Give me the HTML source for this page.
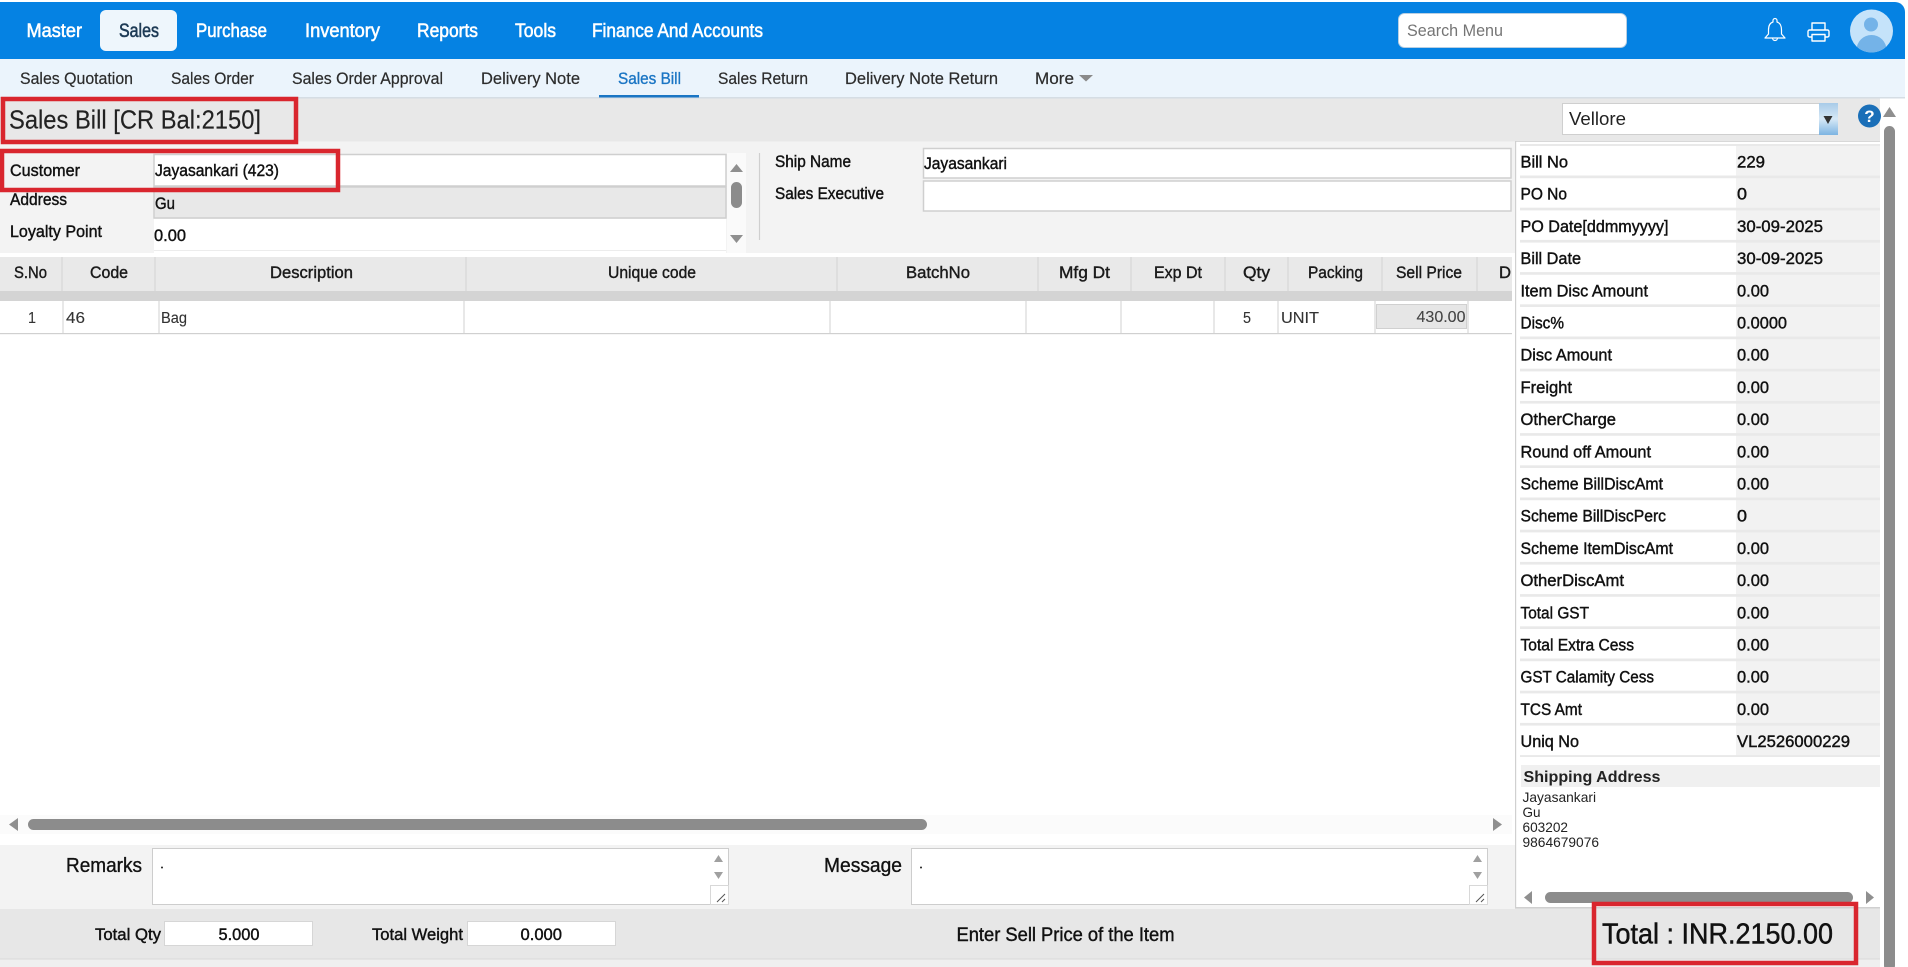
<!DOCTYPE html>
<html lang="en">
<head>
<meta charset="utf-8">
<title>Sales Bill</title>
<style>
html,body{margin:0;padding:0;background:#fff;width:1908px;height:967px;overflow:hidden}
svg{display:block;position:absolute;left:0;top:0}
text{font-family:"Liberation Sans",sans-serif;white-space:pre}
.n{font-size:19px;fill:#fff;stroke:#fff;stroke-width:.55}
.s{font-size:16.5px;fill:#2c2c2c;stroke:#2c2c2c;stroke-width:.2}
.l{font-size:16.5px;fill:#111;stroke:#111;stroke-width:.42}
.h{font-size:16.5px;fill:#1a1a1a;stroke:#1a1a1a;stroke-width:.4}
.c{font-size:15.5px;fill:#333;stroke:#333;stroke-width:.12}
.a{font-size:14px;fill:#222}
.sb{fill:#8c8c8c}
.ar{fill:#8f8f8f}
.in{fill:#fff;stroke:#cfcfcf;stroke-width:1.5}
.d{stroke:#d2d2d2;stroke-width:1}
</style>
</head>
<body>
<svg width="1908" height="967" viewBox="0 0 1908 967" xmlns="http://www.w3.org/2000/svg">
<defs>
<clipPath id="av"><circle cx="1871.5" cy="31" r="21.5"/></clipPath>
<linearGradient id="dd" x1="0" y1="0" x2="0" y2="1"><stop offset="0" stop-color="#a9cbe8"/><stop offset=".5" stop-color="#d6e8f6"/><stop offset="1" stop-color="#7db4e2"/></linearGradient>
</defs>

<!-- top bar -->
<path d="M0 2H1895a10 10 0 0 1 10 10V59H0z" fill="#0582e3"/>
<rect x="100" y="10" width="77" height="41" rx="6" fill="#eef6fc"/>
<text class="n" x="26.5" y="37" textLength="55.5" lengthAdjust="spacingAndGlyphs">Master</text>
<text class="n" x="119" y="37" textLength="40" lengthAdjust="spacingAndGlyphs" style="fill:#1d3a55;stroke:#1d3a55">Sales</text>
<text class="n" x="196" y="37" textLength="71" lengthAdjust="spacingAndGlyphs">Purchase</text>
<text class="n" x="305" y="37" textLength="75" lengthAdjust="spacingAndGlyphs">Inventory</text>
<text class="n" x="417" y="37" textLength="61" lengthAdjust="spacingAndGlyphs">Reports</text>
<text class="n" x="515" y="37" textLength="41" lengthAdjust="spacingAndGlyphs">Tools</text>
<text class="n" x="592" y="37" textLength="171" lengthAdjust="spacingAndGlyphs">Finance And Accounts</text>

<rect x="1398.5" y="13.5" width="228" height="34" rx="6" fill="#fff" stroke="#b9cfe2"/>
<text x="1407" y="36" font-size="16.5" fill="#757575" textLength="96" lengthAdjust="spacingAndGlyphs">Search Menu</text>

<path d="M1775 18.500a2 2 0 0 1 2 2v1.500c3.500 1 4.500 4 4.500 8v4l3.500 4h-20l3.500-4v-4c0-4 1-7 4.500-8v-1.500a2 2 0 0 1 2-2zM1772.500 38a2.500 2.500 0 0 0 5 0" fill="none" stroke="#fff" stroke-width="1.200" stroke-linejoin="round"/>
<g fill="none" stroke="#fff" stroke-width="1.400" stroke-linejoin="round">
<path d="M1812 30v-7h13v7"/>
<path d="M1812 37h-2.500a1.500 1.500 0 0 1-1.500-1.500v-4a1.500 1.500 0 0 1 1.500-1.500h18a1.500 1.500 0 0 1 1.500 1.500v4a1.500 1.500 0 0 1-1.500 1.500H1825"/>
<path d="M1812 34.500h13v6.500h-13z"/>
</g>
<circle cx="1871.500" cy="31" r="21.500" fill="#c5e3fa"/>
<g clip-path="url(#av)"><circle cx="1871" cy="24.500" r="7" fill="#74b3e8"/><ellipse cx="1871.500" cy="50" rx="15" ry="15" fill="#74b3e8"/></g>

<!-- sub nav -->
<rect x="0" y="59" width="1905" height="38" fill="#ebf4fc"/>
<rect x="0" y="97" width="1905" height="1.500" fill="#d5dde4"/>
<rect x="599" y="95" width="100" height="2.500" fill="#1a75c4"/>
<text class="s" x="20" y="84" textLength="113" lengthAdjust="spacingAndGlyphs">Sales Quotation</text>
<text class="s" x="171" y="84" textLength="83" lengthAdjust="spacingAndGlyphs">Sales Order</text>
<text class="s" x="292" y="84" textLength="151" lengthAdjust="spacingAndGlyphs">Sales Order Approval</text>
<text class="s" x="481" y="84" textLength="99" lengthAdjust="spacingAndGlyphs">Delivery Note</text>
<text class="s" x="618" y="84" textLength="63" lengthAdjust="spacingAndGlyphs" style="fill:#1a75c4;stroke:#1a75c4;stroke-width:.35">Sales Bill</text>
<text class="s" x="718" y="84" textLength="90" lengthAdjust="spacingAndGlyphs">Sales Return</text>
<text class="s" x="845" y="84" textLength="153" lengthAdjust="spacingAndGlyphs">Delivery Note Return</text>
<text class="s" x="1035" y="84" textLength="39" lengthAdjust="spacingAndGlyphs">More</text>
<path d="M1079 75h14l-7 6.500z" fill="#8a8a8a"/>

<!-- title strip -->
<rect x="0" y="98.500" width="1880" height="43" fill="#e8e8e8"/>
<text x="9" y="128.500" font-size="26" fill="#222" stroke="#222" stroke-width=".15" textLength="252" lengthAdjust="spacingAndGlyphs">Sales Bill [CR Bal:2150]</text>
<rect x="1562.500" y="103.500" width="257" height="31" fill="#fff" stroke="#cfcfcf"/>
<rect x="1819" y="103" width="19" height="32" fill="url(#dd)"/>
<path d="M1823.500 116h9l-4.500 8z" fill="#333"/>
<text x="1569" y="125" font-size="18.500" fill="#222" textLength="57" lengthAdjust="spacingAndGlyphs">Vellore</text>
<circle cx="1869.500" cy="116" r="11.500" fill="#1a6fb8"/>
<text x="1869.500" y="122" font-size="17" font-weight="bold" fill="#fff" text-anchor="middle">?</text>

<!-- customer block -->
<rect x="0" y="141.500" width="1515" height="111.500" fill="#f3f3f3"/>
<rect x="154" y="154.500" width="572" height="31.500" class="in"/>
<rect x="154" y="187" width="572" height="31" fill="#e8e8e8" stroke="#cfcfcf" stroke-width="1.500"/>
<rect x="154" y="219" width="572" height="34" fill="#fff"/>
<rect x="154" y="250" width="572" height="1" fill="#ececec"/>
<rect x="727" y="153" width="19" height="100" fill="#fafafa"/>
<path d="M730 172l6.500-8 6.500 8z" class="ar"/>
<rect x="731" y="182" width="11" height="26" rx="5.500" class="sb"/>
<path d="M730 235h13l-6.500 8z" class="ar"/>
<line x1="759.500" y1="153" x2="759.500" y2="240" stroke="#cfcfcf" stroke-width="1.200"/>

<text class="l" x="10" y="176" textLength="70" lengthAdjust="spacingAndGlyphs">Customer</text>
<text class="l" x="155" y="176" textLength="124" lengthAdjust="spacingAndGlyphs">Jayasankari (423)</text>
<text class="l" x="10" y="205" textLength="57" lengthAdjust="spacingAndGlyphs">Address</text>
<text class="l" x="155" y="209" textLength="20" lengthAdjust="spacingAndGlyphs">Gu</text>
<text class="l" x="10" y="237" textLength="92" lengthAdjust="spacingAndGlyphs">Loyalty Point</text>
<text class="l" x="154" y="241" textLength="32" lengthAdjust="spacingAndGlyphs">0.00</text>

<text class="l" x="775" y="167" textLength="76" lengthAdjust="spacingAndGlyphs">Ship Name</text>
<text class="l" x="775" y="199" textLength="109" lengthAdjust="spacingAndGlyphs">Sales Executive</text>
<rect x="923.500" y="148.500" width="587.500" height="29.500" class="in"/>
<rect x="923.500" y="181" width="587.500" height="30" class="in"/>
<text class="l" x="924" y="169" textLength="83" lengthAdjust="spacingAndGlyphs">Jayasankari</text>

<!-- table header -->
<rect x="0" y="257" width="1512" height="34" fill="#e9e9e9"/>
<rect x="0" y="291" width="1512" height="10" fill="#d4d4d4"/>
<g class="d">
<line x1="62" y1="257" x2="62" y2="291"/><line x1="155" y1="257" x2="155" y2="291"/><line x1="466" y1="257" x2="466" y2="291"/><line x1="837" y1="257" x2="837" y2="291"/><line x1="1038" y1="257" x2="1038" y2="291"/><line x1="1131" y1="257" x2="1131" y2="291"/><line x1="1225" y1="257" x2="1225" y2="291"/><line x1="1288" y1="257" x2="1288" y2="291"/><line x1="1382" y1="257" x2="1382" y2="291"/><line x1="1477" y1="257" x2="1477" y2="291"/>
</g>
<text class="h" x="14" y="278" textLength="33" lengthAdjust="spacingAndGlyphs">S.No</text>
<text class="h" x="90" y="278" textLength="38" lengthAdjust="spacingAndGlyphs">Code</text>
<text class="h" x="270" y="278" textLength="83" lengthAdjust="spacingAndGlyphs">Description</text>
<text class="h" x="608" y="278" textLength="88" lengthAdjust="spacingAndGlyphs">Unique code</text>
<text class="h" x="906" y="278" textLength="64" lengthAdjust="spacingAndGlyphs">BatchNo</text>
<text class="h" x="1059" y="278" textLength="51" lengthAdjust="spacingAndGlyphs">Mfg Dt</text>
<text class="h" x="1154" y="278" textLength="48" lengthAdjust="spacingAndGlyphs">Exp Dt</text>
<text class="h" x="1243" y="278" textLength="27" lengthAdjust="spacingAndGlyphs">Qty</text>
<text class="h" x="1308" y="278" textLength="55" lengthAdjust="spacingAndGlyphs">Packing</text>
<text class="h" x="1396" y="278" textLength="66" lengthAdjust="spacingAndGlyphs">Sell Price</text>
<text class="h" x="1499" y="278" textLength="12" lengthAdjust="spacingAndGlyphs">D</text>

<!-- table row -->
<rect x="0" y="333" width="1512" height="1.200" fill="#d0d0d0"/>
<g class="d">
<line x1="63" y1="301" x2="63" y2="333"/><line x1="159" y1="301" x2="159" y2="333"/><line x1="464" y1="301" x2="464" y2="333"/><line x1="830" y1="301" x2="830" y2="333"/><line x1="1026" y1="301" x2="1026" y2="333"/><line x1="1121" y1="301" x2="1121" y2="333"/><line x1="1214" y1="301" x2="1214" y2="333"/><line x1="1278" y1="301" x2="1278" y2="333"/><line x1="1375" y1="301" x2="1375" y2="333"/><line x1="1468" y1="301" x2="1468" y2="333"/>
</g>
<rect x="1376.500" y="304.500" width="90" height="24" fill="#e6e6e6" stroke="#d0d0d0"/>
<text class="c" x="28" y="323" textLength="8" lengthAdjust="spacingAndGlyphs">1</text>
<text class="c" x="66" y="323" textLength="19" lengthAdjust="spacingAndGlyphs">46</text>
<text class="c" x="161" y="323" textLength="26" lengthAdjust="spacingAndGlyphs">Bag</text>
<text class="c" x="1243" y="323" textLength="8" lengthAdjust="spacingAndGlyphs">5</text>
<text class="c" x="1281" y="323" textLength="38" lengthAdjust="spacingAndGlyphs">UNIT</text>
<text class="c" x="1416.500" y="322" textLength="49" lengthAdjust="spacingAndGlyphs" style="fill:#444;stroke:#444">430.00</text>

<!-- main horizontal scrollbar -->
<rect x="0" y="815" width="1512" height="19" fill="#fbfbfb"/>
<path d="M18 818v13l-9-6.500z" class="ar"/>
<rect x="28" y="819" width="899" height="11" rx="5.500" class="sb"/>
<path d="M1493 818v13l9-6.500z" class="ar"/>

<!-- remarks -->
<rect x="0" y="845" width="1515" height="63" fill="#f3f3f3"/>
<text x="66" y="872" font-size="20" fill="#111" stroke="#111" stroke-width=".35" textLength="76" lengthAdjust="spacingAndGlyphs">Remarks</text>
<text x="824" y="872" font-size="20" fill="#111" stroke="#111" stroke-width=".35" textLength="78" lengthAdjust="spacingAndGlyphs">Message</text>
<rect x="152.500" y="848.500" width="576" height="56" fill="#fff" stroke="#cdcdcd"/>
<rect x="911.500" y="848.500" width="576" height="56" fill="#fff" stroke="#cdcdcd"/>
<circle cx="162" cy="867.500" r="1" fill="#222"/>
<circle cx="921" cy="867.500" r="1" fill="#222"/>
<path d="M714 862l4.500-7 4.500 7zM714 872h9l-4.500 7z" fill="#a0a0a0"/>
<path d="M1473 862l4.500-7 4.500 7zM1473 872h9l-4.500 7z" fill="#a0a0a0"/>
<rect x="710.500" y="885.500" width="18" height="19" fill="#fff" stroke="#d8d8d8"/>
<rect x="1469.500" y="885.500" width="18" height="19" fill="#fff" stroke="#d8d8d8"/>
<path d="M717 902l8-8M722 902l3-3" stroke="#555" stroke-width="1" fill="none"/>
<path d="M1476 902l8-8M1481 902l3-3" stroke="#555" stroke-width="1" fill="none"/>

<!-- right panel -->
<rect x="1515" y="141" width="365" height="767" fill="#fff"/>
<rect x="1515" y="141" width="365" height="1" fill="#d8d8d8"/>
<rect x="1515" y="141" width="1.200" height="767" fill="#d0d0d0"/>
<rect x="1515" y="907" width="365" height="1.500" fill="#d0d0d0"/>
<rect x="1520" y="144" width="360" height="613" fill="#e9e9e9"/>
<g fill="#fff">
<rect x="1520" y="146" width="216" height="29.500"/><rect x="1520" y="178.200" width="216" height="29.500"/><rect x="1520" y="210.400" width="216" height="29.500"/><rect x="1520" y="242.600" width="216" height="29.500"/><rect x="1520" y="274.800" width="216" height="29.500"/><rect x="1520" y="307" width="216" height="29.500"/><rect x="1520" y="339.200" width="216" height="29.500"/><rect x="1520" y="371.400" width="216" height="29.500"/><rect x="1520" y="403.600" width="216" height="29.500"/><rect x="1520" y="435.800" width="216" height="29.500"/><rect x="1520" y="468" width="216" height="29.500"/><rect x="1520" y="500.200" width="216" height="29.500"/><rect x="1520" y="532.400" width="216" height="29.500"/><rect x="1520" y="564.600" width="216" height="29.500"/><rect x="1520" y="596.800" width="216" height="29.500"/><rect x="1520" y="629" width="216" height="29.500"/><rect x="1520" y="661.200" width="216" height="29.500"/><rect x="1520" y="693.400" width="216" height="29.500"/><rect x="1520" y="725.600" width="216" height="29.500"/>
</g>
<g fill="#f2f2f2">
<rect x="1736" y="146" width="144" height="29.500"/><rect x="1736" y="178.200" width="144" height="29.500"/><rect x="1736" y="210.400" width="144" height="29.500"/><rect x="1736" y="242.600" width="144" height="29.500"/><rect x="1736" y="274.800" width="144" height="29.500"/><rect x="1736" y="307" width="144" height="29.500"/><rect x="1736" y="339.200" width="144" height="29.500"/><rect x="1736" y="371.400" width="144" height="29.500"/><rect x="1736" y="403.600" width="144" height="29.500"/><rect x="1736" y="435.800" width="144" height="29.500"/><rect x="1736" y="468" width="144" height="29.500"/><rect x="1736" y="500.200" width="144" height="29.500"/><rect x="1736" y="532.400" width="144" height="29.500"/><rect x="1736" y="564.600" width="144" height="29.500"/><rect x="1736" y="596.800" width="144" height="29.500"/><rect x="1736" y="629" width="144" height="29.500"/><rect x="1736" y="661.200" width="144" height="29.500"/><rect x="1736" y="693.400" width="144" height="29.500"/><rect x="1736" y="725.600" width="144" height="29.500"/>
</g>
<text class="l" x="1520.500" y="167.500" textLength="47.500" lengthAdjust="spacingAndGlyphs">Bill No</text>
<text class="l" x="1520.500" y="199.700" textLength="46.500" lengthAdjust="spacingAndGlyphs">PO No</text>
<text class="l" x="1520.500" y="231.900" textLength="148" lengthAdjust="spacingAndGlyphs">PO Date[ddmmyyyy]</text>
<text class="l" x="1520.500" y="264.100" textLength="60.500" lengthAdjust="spacingAndGlyphs">Bill Date</text>
<text class="l" x="1520.500" y="296.300" textLength="127.500" lengthAdjust="spacingAndGlyphs">Item Disc Amount</text>
<text class="l" x="1520.500" y="328.500" textLength="43.500" lengthAdjust="spacingAndGlyphs">Disc%</text>
<text class="l" x="1520.500" y="360.700" textLength="91.500" lengthAdjust="spacingAndGlyphs">Disc Amount</text>
<text class="l" x="1520.500" y="392.900" textLength="51.500" lengthAdjust="spacingAndGlyphs">Freight</text>
<text class="l" x="1520.500" y="425.100" textLength="95.500" lengthAdjust="spacingAndGlyphs">OtherCharge</text>
<text class="l" x="1520.500" y="457.300" textLength="130.500" lengthAdjust="spacingAndGlyphs">Round off Amount</text>
<text class="l" x="1520.500" y="489.500" textLength="142.500" lengthAdjust="spacingAndGlyphs">Scheme BillDiscAmt</text>
<text class="l" x="1520.500" y="521.700" textLength="145.500" lengthAdjust="spacingAndGlyphs">Scheme BillDiscPerc</text>
<text class="l" x="1520.500" y="553.900" textLength="152.500" lengthAdjust="spacingAndGlyphs">Scheme ItemDiscAmt</text>
<text class="l" x="1520.500" y="586.100" textLength="103.500" lengthAdjust="spacingAndGlyphs">OtherDiscAmt</text>
<text class="l" x="1520.500" y="618.300" textLength="68.500" lengthAdjust="spacingAndGlyphs">Total GST</text>
<text class="l" x="1520.500" y="650.500" textLength="113.500" lengthAdjust="spacingAndGlyphs">Total Extra Cess</text>
<text class="l" x="1520.500" y="682.700" textLength="133.500" lengthAdjust="spacingAndGlyphs">GST Calamity Cess</text>
<text class="l" x="1520.500" y="714.900" textLength="61.500" lengthAdjust="spacingAndGlyphs">TCS Amt</text>
<text class="l" x="1520.500" y="747.100" textLength="58.500" lengthAdjust="spacingAndGlyphs">Uniq No</text>

<text class="l" x="1737" y="167.500" textLength="28" lengthAdjust="spacingAndGlyphs">229</text>
<text class="l" x="1737" y="199.700" textLength="10" lengthAdjust="spacingAndGlyphs">0</text>
<text class="l" x="1737" y="231.900" textLength="86" lengthAdjust="spacingAndGlyphs">30-09-2025</text>
<text class="l" x="1737" y="264.100" textLength="86" lengthAdjust="spacingAndGlyphs">30-09-2025</text>
<text class="l" x="1737" y="296.300" textLength="32" lengthAdjust="spacingAndGlyphs">0.00</text>
<text class="l" x="1737" y="328.500" textLength="50" lengthAdjust="spacingAndGlyphs">0.0000</text>
<text class="l" x="1737" y="360.700" textLength="32" lengthAdjust="spacingAndGlyphs">0.00</text>
<text class="l" x="1737" y="392.900" textLength="32" lengthAdjust="spacingAndGlyphs">0.00</text>
<text class="l" x="1737" y="425.100" textLength="32" lengthAdjust="spacingAndGlyphs">0.00</text>
<text class="l" x="1737" y="457.300" textLength="32" lengthAdjust="spacingAndGlyphs">0.00</text>
<text class="l" x="1737" y="489.500" textLength="32" lengthAdjust="spacingAndGlyphs">0.00</text>
<text class="l" x="1737" y="521.700" textLength="10" lengthAdjust="spacingAndGlyphs">0</text>
<text class="l" x="1737" y="553.900" textLength="32" lengthAdjust="spacingAndGlyphs">0.00</text>
<text class="l" x="1737" y="586.100" textLength="32" lengthAdjust="spacingAndGlyphs">0.00</text>
<text class="l" x="1737" y="618.300" textLength="32" lengthAdjust="spacingAndGlyphs">0.00</text>
<text class="l" x="1737" y="650.500" textLength="32" lengthAdjust="spacingAndGlyphs">0.00</text>
<text class="l" x="1737" y="682.700" textLength="32" lengthAdjust="spacingAndGlyphs">0.00</text>
<text class="l" x="1737" y="714.900" textLength="32" lengthAdjust="spacingAndGlyphs">0.00</text>
<text class="l" x="1737" y="747.100" textLength="113" lengthAdjust="spacingAndGlyphs">VL2526000229</text>

<rect x="1521" y="765" width="359" height="22" fill="#f0f0f0"/>
<text x="1523.500" y="782" font-size="16" font-weight="bold" fill="#222" textLength="137" lengthAdjust="spacingAndGlyphs">Shipping Address</text>
<text class="a" x="1522.500" y="802" textLength="73.500" lengthAdjust="spacingAndGlyphs">Jayasankari</text>
<text class="a" x="1522.500" y="817" textLength="18" lengthAdjust="spacingAndGlyphs">Gu</text>
<text class="a" x="1522.500" y="832" textLength="45.500" lengthAdjust="spacingAndGlyphs">603202</text>
<text class="a" x="1522.500" y="847" textLength="76.500" lengthAdjust="spacingAndGlyphs">9864679076</text>

<path d="M1532 891v13l-8-6.500z" class="ar"/>
<rect x="1545" y="892" width="308" height="11" rx="5.500" class="sb"/>
<path d="M1866 891v13l8-6.500z" class="ar"/>

<!-- footer -->
<rect x="0" y="908.500" width="1880" height="50.500" fill="#e7e7e7"/>
<rect x="0" y="959" width="1880" height="8" fill="#efefef"/>
<rect x="0" y="958.500" width="1880" height="1" fill="#dadada"/>
<rect x="164.500" y="921.500" width="148" height="24" fill="#fff" stroke="#d6d6d6"/>
<rect x="467.500" y="921.500" width="148" height="24" fill="#fff" stroke="#d6d6d6"/>
<text class="l" x="95" y="940" textLength="66" lengthAdjust="spacingAndGlyphs">Total Qty</text>
<text class="l" x="218.500" y="940" textLength="41" lengthAdjust="spacingAndGlyphs">5.000</text>
<text class="l" x="372" y="940" textLength="91" lengthAdjust="spacingAndGlyphs">Total Weight</text>
<text class="l" x="520.500" y="940" textLength="41.500" lengthAdjust="spacingAndGlyphs">0.000</text>
<text x="956.500" y="941" font-size="19" fill="#111" stroke="#111" stroke-width=".4" textLength="218" lengthAdjust="spacingAndGlyphs">Enter Sell Price of the Item</text>
<text x="1602" y="943.500" font-size="28.500" fill="#111" stroke="#111" stroke-width=".45" textLength="231" lengthAdjust="spacingAndGlyphs">Total : INR.2150.00</text>

<!-- right page scrollbar -->
<path d="M1883 117l6.500-10 6.500 10z" class="ar"/>
<rect x="1884" y="126" width="11" height="845" rx="5.500" class="sb"/>

<!-- red annotation boxes -->
<rect x="3" y="99" width="293" height="43" fill="none" stroke="#d9262e" stroke-width="4.500"/>
<rect x="2" y="151" width="336" height="39" fill="none" stroke="#d9262e" stroke-width="4.500"/>
<rect x="1594" y="904" width="262" height="59" fill="none" stroke="#d9262e" stroke-width="4.500"/>
</svg>
</body>
</html>
